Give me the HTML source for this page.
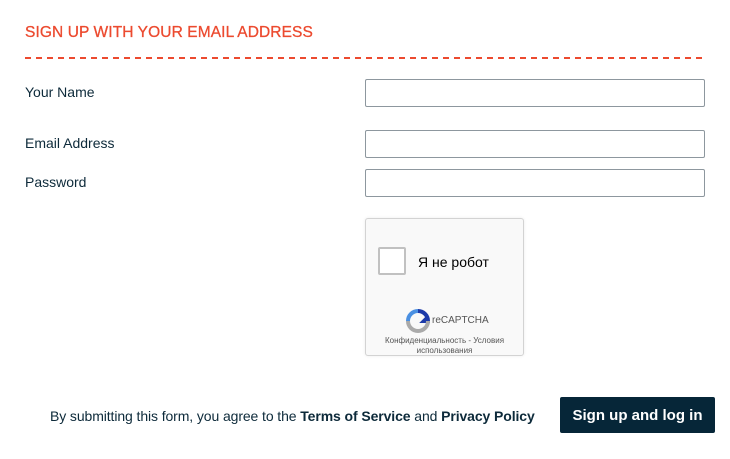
<!DOCTYPE html>
<html><head><meta charset="utf-8"><style>
body{margin:0;width:730px;height:459px;background:#fff;font-family:"Liberation Sans",Arial,sans-serif;position:relative;overflow:hidden;color:#0d2a3a}
.a{position:absolute}
h1{position:absolute;left:25px;top:24px;margin:0;font-size:15.5px;font-weight:normal;color:#ec4a2f;letter-spacing:0.1px;-webkit-text-stroke:0.3px #ec4a2f}
.dash{left:25px;top:57px;width:681px;height:2px;background:repeating-linear-gradient(90deg,#ec4a2f 0 6px,transparent 6px 11px)}
.lab{left:25px;font-size:14px}
.inp{left:365px;width:338px;height:26px;border:1px solid #8d979e;border-radius:2px;background:#fff}
.cap{left:365px;top:218px;width:157px;height:136px;border:1px solid #d3d3d3;border-radius:3px;background:#f9f9f9;box-shadow:0 0 3px rgba(0,0,0,.08)}
.cb{left:12px;top:28px;width:24px;height:24px;border:2px solid #c1c1c1;border-radius:2px;background:#fff}
</style></head><body>
<h1>SIGN UP WITH YOUR EMAIL ADDRESS</h1>
<div class="a dash"></div>
<div class="a lab" style="top:84px">Your Name</div>
<div class="a inp" style="top:79px"></div>
<div class="a lab" style="top:135px">Email Address</div>
<div class="a inp" style="top:130px"></div>
<div class="a lab" style="top:174px">Password</div>
<div class="a inp" style="top:169px"></div>
<div class="a cap">
 <div class="a cb"></div>
 <div class="a" style="left:52px;top:35px;font-size:14px;color:#000">Я не робот</div>
 <svg class="a" style="left:40px;top:90px" width="24" height="24" viewBox="0 0 24 24">
  <path d="M12 2a10 10 0 0 1 10 10h-4l3-3" fill="none" stroke="#1c3aa9" stroke-width="4"/>
  <path d="M2 12A10 10 0 0 1 12 2" fill="none" stroke="#4a90e2" stroke-width="4"/>
  <path d="M22 12a10 10 0 0 1-20 0" fill="none" stroke="#aaa" stroke-width="4"/>
 </svg>
 <div class="a" style="left:66px;top:96px;font-size:10px;color:#555">reCAPTCHA</div>
 <div class="a" style="left:0;width:157px;top:117px;font-size:8px;color:#555;text-align:center;line-height:10px">Конфиденциальность - Условия<br>использования</div>
</div>
<div class="a" style="left:50px;top:408px;font-size:14px;color:#0d2a3a;letter-spacing:-0.1px">By submitting this form, you agree to the <b style="font-weight:600">Terms of Service</b> and <b style="font-weight:600">Privacy Policy</b></div>
<div class="a" style="left:560px;top:397px;width:155px;height:36px;background:#062638;border-radius:2px;color:#fff;font-weight:bold;font-size:15px;line-height:38px;text-align:center">Sign up and log in</div>
</body></html>
